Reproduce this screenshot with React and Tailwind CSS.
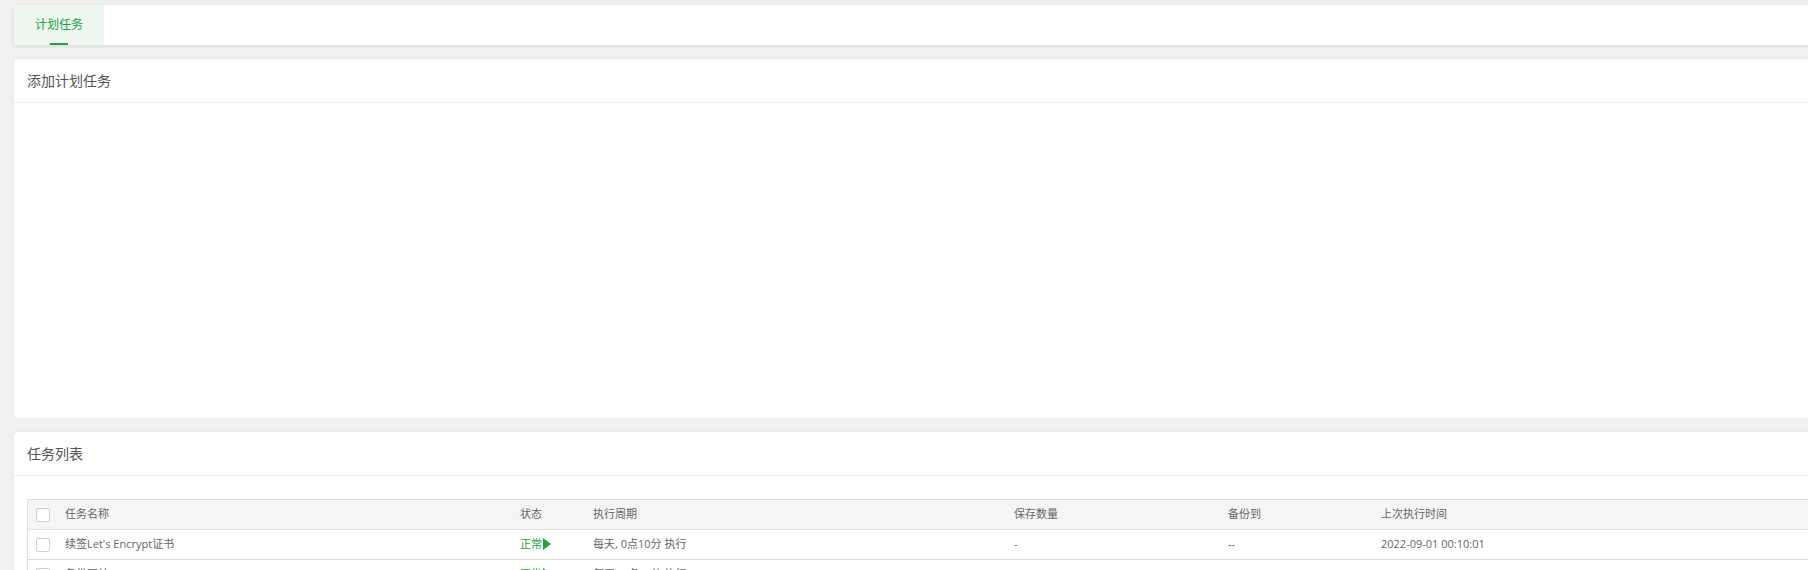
import React from "react";

const font = { fontFamily: '"Open Sans","Noto Sans CJK SC",sans-serif' };

const cols = "grid grid-cols-[29px_455px_73px_421px_214px_153px_1fr]";

function Checkbox() {
  return <span className="block w-[14px] h-[14px] border border-[#d0d0d0] rounded-[2px] bg-white" />;
}

function Tri() {
  return (
    <svg width="8" height="12" viewBox="0 0 8 12" className="ml-[1px] -mt-[1px]">
      <polygon points="0,0 8,6 0,12" fill="#20a53a" />
    </svg>
  );
}

const rows = [
  {
    name: "续签Let's Encrypt证书",
    cycle: "每天, 0点10分 执行",
    keep: "-",
    to: "--",
    last: "2022-09-01 00:10:01",
  },
  {
    name: "备份网站[all] site_bak",
    cycle: "每天, 2点30分 执行",
    keep: "-",
    to: "--",
    last: "2022-09-01 02:30:01",
  },
];

export default function App() {
  return (
    <div
      className="h-[570px] overflow-hidden bg-[#f0f0f0] pl-[14px] pt-[5px]"
      style={font}
    >
      <div className="h-[40px] bg-white rounded-l-[4px] shadow-[0_1px_4px_rgba(0,0,0,0.1)] flex">
        <div className="relative w-[90px] bg-[#eef8f0] rounded-l-[4px] flex items-center justify-center text-[12px] text-[#20a53a]">
          计划任务
          <span className="absolute bottom-0 left-[36px] w-[18px] h-[2px] bg-[#20a53a]" />
        </div>
      </div>

      <div className="mt-[14px] h-[359px] bg-white rounded-l-[4px] shadow-[0_0_3px_rgba(0,0,0,0.05)]">
        <div className="h-[44px] border-b border-[#ececec] flex items-center px-[13px] text-[14px] text-[#555]">
          添加计划任务
        </div>
      </div>

      <div className="mt-[14px] h-[200px] bg-white rounded-l-[4px] shadow-[0_0_3px_rgba(0,0,0,0.05)]">
        <div className="h-[44px] border-b border-[#ececec] flex items-center px-[13px] text-[14px] text-[#555]">
          任务列表
        </div>
        <div className="pt-[23px] pl-[13px]">
          <div className="border-l border-t border-[#dddddd] text-[11px] text-[#666]">
            <div className={`${cols} h-[30px] items-center bg-[#f5f5f5] border-b border-[#dddddd]`}>
              <div className="pl-[8px]"><Checkbox /></div>
              <div className="pl-[8px]">任务名称</div>
              <div className="pl-[8px]">状态</div>
              <div className="pl-[8px]">执行周期</div>
              <div className="pl-[8px]">保存数量</div>
              <div className="pl-[8px]">备份到</div>
              <div className="pl-[8px]">上次执行时间</div>
            </div>
            {rows.map((r, i) => (
              <div key={i} className={`${cols} h-[30px] items-center border-b border-[#dddddd]`}>
                <div className="pl-[8px]"><Checkbox /></div>
                <div className="pl-[8px]">{r.name}</div>
                <div className="pl-[8px] flex items-center text-[#20a53a]">
                  正常
                  <Tri />
                </div>
                <div className="pl-[8px]">{r.cycle}</div>
                <div className="pl-[8px]">{r.keep}</div>
                <div className="pl-[8px]">{r.to}</div>
                <div className="pl-[8px]">{r.last}</div>
              </div>
            ))}
          </div>
        </div>
      </div>
    </div>
  );
}
